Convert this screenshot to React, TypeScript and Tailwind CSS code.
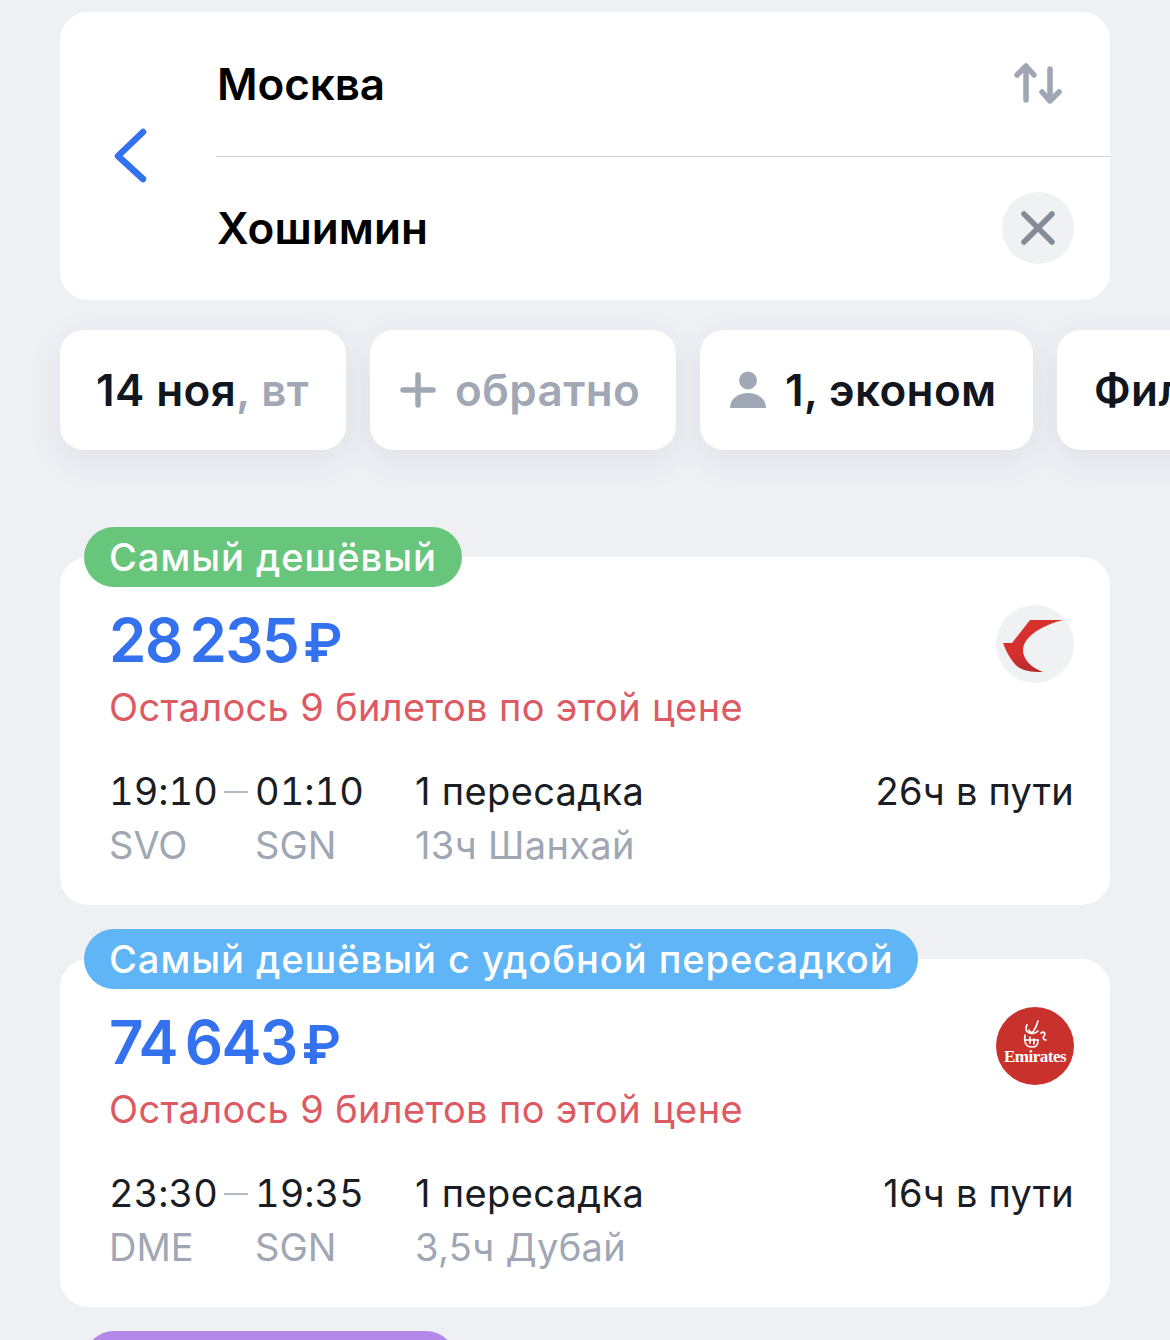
import React from "react";

const font = { fontFamily: "Inter, 'Noto Sans', sans-serif" };

function Chevron() {
  return (
    <svg width="36" height="58" viewBox="0 0 36 58" fill="none">
      <path d="M30 5 L5 29 L30 52" stroke="#3371ee" strokeWidth="6.5" strokeLinecap="round" strokeLinejoin="round" />
    </svg>
  );
}

function Swap() {
  return (
    <svg width="52" height="46" viewBox="0 0 52 46" fill="none" stroke="#9fa7b5" strokeWidth="5.5" strokeLinecap="round" strokeLinejoin="round">
      <path d="M14 39 V5 M5 14 L14 5 L22 14" />
      <path d="M38 8 V40 M30 31 L38 40 L47 31" />
    </svg>
  );
}

function Close() {
  return (
    <div className="w-[72px] h-[72px] rounded-full bg-[#f0f1f3] flex items-center justify-center">
      <svg width="34" height="34" viewBox="0 0 34 34" fill="none" stroke="#858b97" strokeWidth="5.5" strokeLinecap="round">
        <path d="M3 3 L31 31 M31 3 L3 31" />
      </svg>
    </div>
  );
}

function Plus() {
  return (
    <svg width="36" height="36" viewBox="0 0 36 36" fill="none" stroke="#a1a8b5" strokeWidth="5.5" strokeLinecap="round">
      <path d="M18 3 V33 M3 18 H33" />
    </svg>
  );
}

function Person() {
  return (
    <svg width="38" height="38" viewBox="0 0 38 38" fill="#a1a8b5">
      <circle cx="19" cy="9.5" r="9" />
      <path d="M1 37 C1 28 9 22 19 22 C29 22 37 28 37 37 Z" />
    </svg>
  );
}

function RedWing() {
  return (
    <div className="w-[78px] h-[78px] rounded-full bg-[#f0f1f3] flex items-center justify-center overflow-hidden">
      <svg width="78" height="78" viewBox="0 0 78 78">
        <defs>
          <linearGradient id="wing" x1="0" y1="0" x2="0" y2="1">
            <stop offset="0" stopColor="#d9322e" />
            <stop offset="0.7" stopColor="#d42f2e" />
            <stop offset="1" stopColor="#b52a2e" />
          </linearGradient>
        </defs>
        <path d="M7 38 L16 38 L34 15 C45 15 55 15 67 15 C48 20 28 30 27 45 C27 55 36 63 47 67 C34 67 24 66 18 58 C13 52 10 46 7 38 Z" fill="url(#wing)" />
      </svg>
    </div>
  );
}

function Emirates() {
  return (
    <div className="w-[78px] h-[78px] rounded-full bg-[#c8312c] flex flex-col items-center overflow-hidden">
      <svg width="24" height="28" viewBox="0 0 24 28" fill="none" stroke="#fff" strokeWidth="1.7" strokeLinecap="round" className="mt-[13px] shrink-0">
        <path d="M15 1 C14 5 12 9 10 12 C8 13 6 12 6 10" />
        <path d="M4 5 C2 8 3 12 6 13 C9 14 13 13 15 11" />
        <path d="M18 13 C21 11 23 13 21 16 C19 18 21 20 23 20" />
        <path d="M2 15 C1 21 2 27 9 27 C13 27 15 26 15 20" />
        <path d="M7 17 V23 M11 19 V24 M2 20 H15" />
      </svg>
      <span className="text-[17px] leading-[17px] text-white tracking-[-0.5px] font-bold shrink-0" style={{ fontFamily: "'Liberation Serif', serif" }}>
        Emirates
      </span>
    </div>
  );
}

type Ticket = {
  badge: string;
  badgeClass: string;
  price: string;
  logo: React.ReactNode;
  dep: string;
  arr: string;
  from: string;
  to: string;
  stop: string;
  total: string;
};

const tickets: Ticket[] = [
  {
    badge: "Самый дешёвый",
    badgeClass: "bg-[#68c57c]",
    price: "28 235",
    logo: <RedWing />,
    dep: "19:10",
    arr: "01:10",
    from: "SVO",
    to: "SGN",
    stop: "13ч Шанхай",
    total: "26ч в пути",
  },
  {
    badge: "Самый дешёвый с удобной пересадкой",
    badgeClass: "bg-[#5fb5f5]",
    price: "74 643",
    logo: <Emirates />,
    dep: "23:30",
    arr: "19:35",
    from: "DME",
    to: "SGN",
    stop: "3,5ч Дубай",
    total: "16ч в пути",
  },
];

function TicketCard({ t }: { t: Ticket }) {
  return (
    <div className="flex flex-col">
      <div className={`relative z-10 flex w-fit h-[60px] items-center rounded-full px-[25px] ml-[24px] -mb-[30px] text-white text-[38px] font-medium tracking-[0.97px] whitespace-nowrap ${t.badgeClass}`}>
        {t.badge}
      </div>
      <div className="bg-white rounded-[28px] h-[348px] pl-[49px] pr-[36px] pt-[48px]">
        <div className="flex justify-between">
          <div>
            <div className="h-[72px] text-[60px] leading-[72px] font-semibold text-[#3371ee] tracking-[-1.5px] -mt-[1px] whitespace-nowrap" style={{ wordSpacing: "-6px", fontFeatureSettings: '"calt" 0' }}>
              {t.price}
              <span className="text-[54px] leading-none ml-[5px]">₽</span>
            </div>
            <div className="text-[38px] leading-[44px] text-[#dd5a62] tracking-[0.35px] mt-[9px]">
              Осталось 9 билетов по этой цене
            </div>
          </div>
          <div>{t.logo}</div>
        </div>
        <div className="flex justify-between mt-[35px]">
          <div className="flex">
            <div className="grid grid-cols-[146px_160px] text-[38px] leading-[54px]">
              <div className="relative text-[#1a1d24] tabular-nums" style={{ fontFeatureSettings: '"calt" 0, "tnum" 1' }}>
                {t.dep}
                <span className="absolute left-[115px] top-[27px] w-[24px] h-[2px] bg-[#b4bac4]" />
              </div>
              <div className="text-[#1a1d24] tabular-nums" style={{ fontFeatureSettings: '"calt" 0, "tnum" 1' }}>{t.arr}</div>
              <div className="text-[#9fa7b5]">{t.from}</div>
              <div className="text-[#9fa7b5]">{t.to}</div>
            </div>
            <div className="text-[38px] leading-[54px] tracking-[0.35px]">
              <div className="text-[#1a1d24]">1 пересадка</div>
              <div className="text-[#9fa7b5]">{t.stop}</div>
            </div>
          </div>
          <div className="text-[38px] leading-[54px] tracking-[0.25px] text-[#1a1d24]">{t.total}</div>
        </div>
      </div>
    </div>
  );
}

const chip = "h-[120px] shrink-0 bg-white rounded-[24px] shadow-[0_10px_36px_rgba(60,70,100,0.08)] flex items-center whitespace-nowrap";

export default function App() {
  return (
    <div className="w-[1170px] h-[1340px] overflow-hidden bg-[#eef0f4] pl-[60px] pt-[12px]" style={font}>
      <div className="w-[1050px] h-[288px] bg-white rounded-[28px] flex">
        <div className="w-[156px] flex items-center justify-start pl-[53px] shrink-0">
          <Chevron />
        </div>
        <div className="flex-1 flex flex-col">
          <div className="h-[145px] flex items-center justify-between pr-[46px] pl-[1px] border-b border-[#cfd1d6]">
            <span className="text-[44px] font-semibold text-black tracking-[-0.1px]">Москва</span>
            <Swap />
          </div>
          <div className="flex-1 flex items-center justify-between pr-[36px] pl-[1px] pb-[1px]">
            <span className="text-[44px] font-semibold text-black tracking-[0.1px]">Хошимин</span>
            <Close />
          </div>
        </div>
      </div>

      <div className="flex gap-[24px] mt-[30px] text-[44px] font-semibold tracking-[0.4px] text-[#11161f]">
        <div className={`${chip} w-[286px] pl-[36px]`}>
          14 ноя<span className="text-[#a1a8b5]">, вт</span>
        </div>
        <div className={`${chip} w-[306px] pl-[30px] gap-[19px] text-[#a1a8b5]`}>
          <Plus />
          <span>обратно</span>
        </div>
        <div className={`${chip} w-[333px] pl-[29px] gap-[18px]`}>
          <Person />
          <span>1, эконом</span>
        </div>
        <div className={`${chip} w-[200px] pl-[37px]`}>
          Фильтры
        </div>
      </div>

      <div className="w-[1050px] mt-[77px] flex flex-col gap-[24px]">
        {tickets.map((t) => (
          <TicketCard key={t.price} t={t} />
        ))}
        <div className="w-[372px] h-[60px] shrink-0 ml-[24px] rounded-full bg-[#b287e8]" />
      </div>
    </div>
  );
}
